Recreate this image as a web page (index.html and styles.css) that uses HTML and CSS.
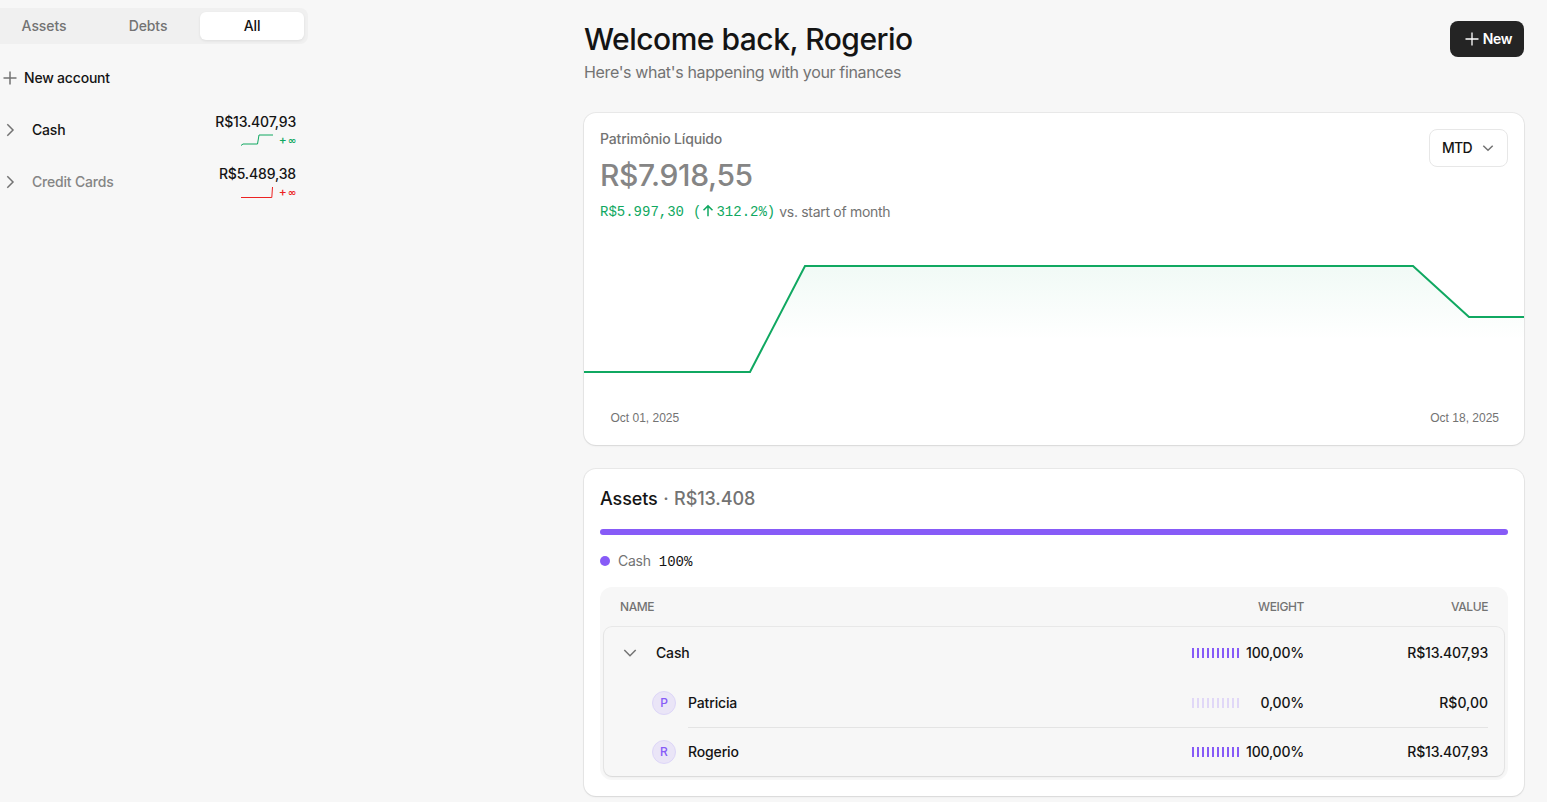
FILE: index.html
```html
<!DOCTYPE html>
<html lang="en">
<head>
<meta charset="utf-8">
<title>Dashboard</title>
<link rel="stylesheet" href="styles.css">
</head>
<body>
<div class="app">
  <aside class="sidebar">
    <nav class="tabs">
      <button class="tab">Assets</button>
      <button class="tab">Debts</button>
      <button class="tab active">All</button>
    </nav>
    <button class="new-account">
      <svg class="icon" viewBox="0 0 20 20"><path d="M10 3.500v13M3.500 10h13"/></svg>
      <span>New account</span>
    </button>
    <div class="group">
      <svg class="icon" viewBox="0 0 20 20"><path d="M7.300 4.300 13 10l-5.700 5.700"/></svg>
      <span class="group-name">Cash</span>
      <div class="group-total">
        <span class="amount cash-amount">R$13.407,93</span>
        <div class="trend green">
          <svg class="spark" viewBox="0 0 32 14"><path d="M0 12.500 2 11H16.500L18 2H32"/></svg>
          <span>+</span><span class="inf">∞</span>
        </div>
      </div>
    </div>
    <div class="group">
      <svg class="icon" viewBox="0 0 20 20"><path d="M7.300 4.300 13 10l-5.700 5.700"/></svg>
      <span class="group-name muted">Credit Cards</span>
      <div class="group-total">
        <span class="amount card-amount">R$5.489,38</span>
        <div class="trend red">
          <svg class="spark" viewBox="0 0 32 14"><path d="M0 12.500H30.800L31.500 2"/></svg>
          <span>+</span><span class="inf">∞</span>
        </div>
      </div>
    </div>
  </aside>
  <main class="main">
    <header class="header">
      <div>
        <h1>Welcome back, Rogerio</h1>
        <p class="subtitle">Here's what's happening with your finances</p>
      </div>
      <button class="btn-new">
        <svg class="icon" viewBox="0 0 20 20"><path d="M10 3.500v13M3.500 10h13"/></svg>
        <span>New</span>
      </button>
    </header>
    <section class="card worth">
      <div class="worth-head">
        <div>
          <p class="worth-label">Patrimônio Líquido</p>
          <p class="worth-value">R$7.918,55</p>
          <p class="worth-change"><span class="mono">R$5.997,30</span><span class="mono paren">(</span><svg class="arrow" viewBox="0 0 14 14"><path d="M7 12.200V2M2.500 6.300 7 1.900l4.500 4.400"/></svg><span class="mono">312.2%)</span><span class="versus">vs. start of month</span></p>
        </div>
        <button class="period"><span>MTD</span>
          <svg class="icon" viewBox="0 0 20 20"><path d="m5.300 7.700 4.700 4.600 4.700-4.600"/></svg>
        </button>
      </div>
      <svg class="chart" viewBox="0 0 940 160">
        <defs><linearGradient id="fade" gradientUnits="userSpaceOnUse" x1="0" y1="26" x2="0" y2="100"><stop offset="0" stop-color="#10a861" stop-opacity=".06"/><stop offset="1" stop-color="#10a861" stop-opacity="0"/></linearGradient></defs>
        <path class="area" d="M0 132H166L221 26H829L885 77H940V160H0Z"/>
        <path class="line" d="M0 132H166L221 26H829L885 77H940"/>
      </svg>
      <div class="dates"><span>Oct 01, 2025</span><span>Oct 18, 2025</span></div>
    </section>
    <section class="card assets">
      <h2>Assets <span class="dot-sep">·</span> <span class="sum">R$13.408</span></h2>
      <div class="bar"></div>
      <div class="legend"><i class="dot"></i><span class="legend-name">Cash</span><span class="mono">100%</span></div>
      <div class="table">
        <div class="thead"><span class="grow">NAME</span><span class="weight">WEIGHT</span><span class="value">VALUE</span></div>
        <div class="rows">
          <div class="row top">
            <svg class="icon" viewBox="0 0 20 20"><path d="m4.300 7 5.700 5.700L15.700 7"/></svg>
            <span class="grow name">Cash</span>
            <span class="weight"><i class="ticks"></i><span class="pct">100,00%</span></span>
            <span class="value cash-amount">R$13.407,93</span>
          </div>
          <div class="row child">
            <span class="avatar">P</span>
            <span class="grow name">Patricia</span>
            <span class="weight"><i class="ticks faint"></i><span class="pct">0,00%</span></span>
            <span class="value zero">R$0,00</span>
          </div>
          <div class="rule"></div>
          <div class="row child">
            <span class="avatar">R</span>
            <span class="grow name">Rogerio</span>
            <span class="weight"><i class="ticks"></i><span class="pct">100,00%</span></span>
            <span class="value cash-amount">R$13.407,93</span>
          </div>
        </div>
      </div>
    </section>
  </main>
</div>
</body>
</html>
```

FILE: styles.css
```css
* { box-sizing: border-box; margin: 0; padding: 0; }
body { background: #f7f7f7; color: #141414; font: 500 14px/20px Inter, "Liberation Sans", sans-serif; height: 802px; overflow: hidden; }
button { font: inherit; color: inherit; border: 0; background: none; }
.app { display: flex; justify-content: space-between; height: 802px; }
.icon { width: 20px; height: 20px; flex: none; fill: none; stroke: #737373; stroke-width: 1.5; }
.muted { color: #858585; }

.sidebar { width: 308px; padding-top: 8px; }
.tabs { display: flex; width: 320px; margin-left: -12px; padding: 4px; height: 36px; background: #f0f0f0; border-radius: 8px; }
.tab { flex: 1; height: 28px; border-radius: 6px; color: #737373; letter-spacing: -.1px; }
.tab.active { background: #fff; color: #141414; box-shadow: 0 1px 3px rgba(0,0,0,.08); }
.new-account { display: flex; align-items: center; gap: 4px; height: 36px; margin: 16px 0 8px; letter-spacing: -.2px; }
.group { display: flex; align-items: center; height: 52px; padding-right: 12px; }
.group-name { margin-left: 12px; flex: 1; letter-spacing: -.2px; }
.group-total { display: flex; flex-direction: column; align-items: flex-end; }
.amount { line-height: 20px; }
.cash-amount { letter-spacing: -.17px; }
.card-amount { letter-spacing: -.15px; }
.trend { display: flex; align-items: center; height: 16px; font-size: 12px; }
.trend .inf { font: 700 10px "DejaVu Sans", sans-serif; margin-left: 1px; }
.spark { width: 32px; height: 14px; margin-right: 6px; fill: none; stroke: currentColor; stroke-width: 1; }
.green { color: #10a861; }
.red { color: #ec2222; }

.main { width: 963px; padding: 20px 23px 0 0; }
.header { display: flex; justify-content: space-between; height: 93px; }
h1 { font-size: 30px; line-height: 38px; font-weight: 500; letter-spacing: -.5px; }
.subtitle { font-size: 16px; line-height: 24px; font-weight: 400; color: #737373; margin-top: 2px; letter-spacing: -.35px; }
.btn-new { display: flex; align-items: center; justify-content: center; width: 74px; height: 36px; margin-top: 1px; background: #242424; color: #fff; border-radius: 8px; gap: 1px; font-weight: 600; letter-spacing: -.35px; }
.btn-new .icon { stroke: #fff; stroke-width: 1.300; }
.card { width: 940px; background: #fff; border-radius: 12px; box-shadow: 0 0 0 1px rgba(11,11,11,.06), 0 1px 2px rgba(11,11,11,.08); margin-bottom: 24px; }
.worth { height: 332px; }
.worth-head { display: flex; justify-content: space-between; padding: 16px; height: 127px; }
.worth-label { color: #737373; letter-spacing: -.16px; }
.worth-value { font-size: 30px; line-height: 38px; color: #858585; margin-top: 7px; letter-spacing: -.37px; }
.worth-change { display: flex; align-items: center; margin-top: 7px; height: 20px; color: #10a861; }
.mono { font-family: "Liberation Mono", monospace; font-weight: 400; padding-top: 1px; }
.paren { margin-left: 9px; }
.arrow { width: 14px; height: 14px; margin: 0 1px 0 0; fill: none; stroke: #10a861; stroke-width: 1.500; }
.versus { color: #737373; font-weight: 400; margin-left: 4px; padding-top: 1px; letter-spacing: -.3px; }
.period { display: flex; align-items: center; justify-content: space-between; width: 79px; height: 38px; padding: 0 9px 0 12px; border: 1px solid #e7e7e7; border-radius: 8px; letter-spacing: -.7px; }
.chart { display: block; width: 940px; height: 160px; }
.area { fill: url(#fade); }
.line { fill: none; stroke: #10a861; stroke-width: 2; }
.dates { display: flex; justify-content: space-between; padding: 8px 25px 0 26.500px; font: 400 12px/20px "Liberation Sans", sans-serif; color: #737373; }

.assets { height: 327px; padding: 16px; margin: 0; }
h2 { display: flex; gap: 5.500px; font-size: 18px; line-height: 28px; font-weight: 500; letter-spacing: -.1px; }
.dot-sep, .sum { color: #737373; }
.bar { height: 6px; border-radius: 3px; background: #875bf7; margin-top: 16px; }
.legend { display: flex; align-items: center; height: 20px; margin-top: 16px; }
.dot { width: 10px; height: 10px; border-radius: 50%; background: #875bf7; margin-right: 8px; }
.legend-name { color: #737373; font-weight: 400; margin-right: 8px; letter-spacing: -.25px; }
.table { margin-top: 16px; background: #f7f7f7; border-radius: 12px; padding: 0 4px 4px; height: 193px; }
.thead { display: flex; align-items: center; height: 40px; padding: 0 16px; font-size: 12px; color: #737373; letter-spacing: -.4px; }
.grow { flex: 1; }
.weight { width: 140px; display: flex; justify-content: flex-end; align-items: center; }
.value { width: 184px; text-align: right; }
.pct { width: 65px; text-align: right; letter-spacing: -.2px; }
.rows { height: 149px; background: #f7f7f7; border-radius: 8px; box-shadow: 0 0 0 1px rgba(11,11,11,.06), 0 1px 2px rgba(11,11,11,.08); }
.row { display: flex; align-items: center; padding: 0 16px; }
.row .name { padding-left: 16px; letter-spacing: -.15px; }
.top { height: 52px; }
.child { height: 48px; padding-left: 48px; }
.child .name { padding-left: 12px; }
.avatar { width: 24px; height: 24px; border-radius: 50%; border: 1px solid #ddd6f8; background: #eae5f7; color: #875bf7; font-size: 12px; line-height: 22px; text-align: center; }
.rule { height: 1px; margin: 0 16px 0 84px; background: #e4e4e4; }
.ticks { width: 47px; height: 10px; background: repeating-linear-gradient(90deg, #875bf7 0 2px, transparent 2px 5px); }
.faint { opacity: .2; }
```
